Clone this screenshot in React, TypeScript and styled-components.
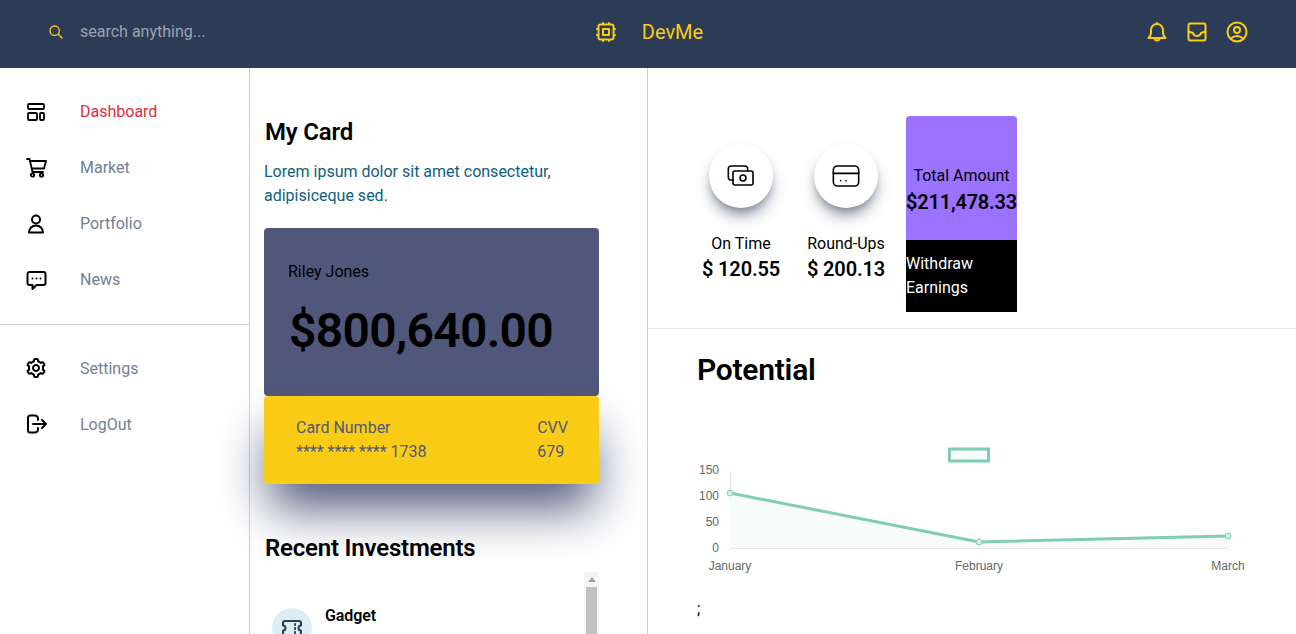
import React, { ReactNode } from 'react'
import styled, { createGlobalStyle } from 'styled-components'
import { BiCog } from 'react-icons/bi'

const GlobalStyle = createGlobalStyle`
  html, body {
    margin: 0;
    padding: 0;
    height: 100%;
    background: #fff;
    font-family: Roboto, "Liberation Sans", sans-serif;
  }
  #root { height: 100%; }
  * { box-sizing: border-box; }
`

const Page = styled.div`
  display: flex;
  flex-direction: column;
  height: 100vh;
  overflow: hidden;
`

const TopBar = styled.header`
  display: grid;
  grid-template-columns: 1fr auto 1fr;
  align-items: center;
  flex: 0 0 68px;
  padding: 0 47px 4px 48px;
  background: #2d3c56;
  color: #facc15;
`

const SearchBox = styled.label`
  display: flex;
  align-items: center;
  gap: 16px;
`

const SearchInput = styled.input`
  width: 240px;
  padding: 0;
  border: 0;
  outline: 0;
  background: transparent;
  color: #fff;
  font: 16px/24px Roboto, sans-serif;
  &::placeholder { color: #9ca3af; opacity: 1; }
`

const Brand = styled.div`
  display: flex;
  align-items: center;
  gap: 24px;
  font-size: 20px;
  line-height: 28px;
`

const TopActions = styled.div`
  display: flex;
  justify-content: flex-end;
  gap: 16px;
`

const Body = styled.div`
  display: flex;
  flex: 1;
  min-height: 0;
`

const Sidebar = styled.nav`
  flex: 0 0 250px;
  border-right: 1px solid #cbd0d8;
`

const NavGroup = styled.ul<{ $divided?: boolean }>`
  margin: 0;
  padding: ${p => (p.$divided ? '15px 0 17px' : '15px 0')};
  list-style: none;
  border-bottom: ${p => (p.$divided ? '1px solid #cbd0d8' : '0')};
`

const NavItem = styled.li<{ $active?: boolean }>`
  display: flex;
  align-items: center;
  gap: 32px;
  height: 56px;
  padding-left: 24px;
  font-size: 16px;
  color: ${p => (p.$active ? '#e02d3c' : '#718096')};
  svg { color: #000; flex: none; }
`

const CardColumn = styled.section`
  flex: 0 0 398px;
  padding: 46px 0 0 14px;
  border-right: 1px solid #cbd0d8;
`

const SectionTitle = styled.h2`
  margin: 0;
  padding-left: 1px;
  font-size: 24px;
  line-height: 36px;
  font-weight: 600;
  letter-spacing: -0.2px;
  color: #000;
`

const Intro = styled.p`
  margin: 10px 0 20px;
  width: 320px;
  font-size: 16px;
  line-height: 24px;
  color: #0f5e7d;
`

const BalanceCard = styled.div`
  display: flex;
  flex-direction: column;
  width: 335px;
  height: 168px;
  padding: 32px 24px 0;
  border-radius: 4px;
  background: #50577a;
  color: #000;
`

const Holder = styled.div`
  font-size: 16px;
  line-height: 24px;
`

const Balance = styled.div`
  margin: 11px 0 0 1px;
  font-size: 48px;
  line-height: 72px;
  font-weight: 600;
  letter-spacing: -0.7px;
  white-space: nowrap;
`

const DetailCard = styled.div`
  display: flex;
  justify-content: space-between;
  width: 335px;
  height: 88px;
  padding: 20px 31px 0 32px;
  border-radius: 4px;
  background: #facc15;
  color: #50577a;
  font-size: 16px;
  line-height: 24px;
  box-shadow: 0 30px 50px -6px #50577a;
`

const RecentTitle = styled(SectionTitle)`
  margin: 46px 0 6px;
`

const InvestmentPanel = styled.div`
  display: flex;
  width: 335px;
  height: 300px;
`

const InvestmentList = styled.ul`
  flex: 1;
  margin: 0;
  padding: 32px 0 0 8px;
  list-style: none;
`

const ScrollRail = styled.div`
  display: flex;
  flex-direction: column;
  align-items: center;
  flex: 0 0 15px;
  background: #f5f5f5;
`

const ScrollArrow = styled.span`
  flex: none;
  width: 8px;
  height: 5px;
  margin: 5px 0;
  border-style: solid;
  border-width: 0 4px 5px;
  border-color: transparent transparent #a3a3a3;
`

const ScrollThumb = styled.span`
  flex: none;
  width: 11px;
  height: 220px;
  background: #c1c1c1;
`

const InvestmentRow = styled.li`
  display: flex;
  gap: 13px;
`

const InvestmentIcon = styled.span`
  display: flex;
  align-items: center;
  justify-content: center;
  flex: none;
  width: 40px;
  height: 40px;
  margin-top: 4px;
  border-radius: 50%;
  background: #dceef4;
  color: #2d3c56;
`

const InvestmentName = styled.div`
  font-size: 16px;
  line-height: 24px;
  font-weight: 600;
  letter-spacing: -0.1px;
  color: #000;
`

const StatsColumn = styled.main`
  flex: 1;
  min-width: 0;
`

const StatsRow = styled.div`
  display: flex;
  gap: 3px;
  height: 261px;
  padding: 48px 0 16px 42px;
  border-bottom: 1px solid #e5e7eb;
`

const Stat = styled.div`
  display: flex;
  flex-direction: column;
  align-items: center;
  width: 102px;
  padding-top: 28px;
  color: #000;
`

const StatBubble = styled.span`
  display: flex;
  align-items: center;
  justify-content: center;
  width: 64px;
  height: 64px;
  margin-bottom: 24px;
  border-radius: 50%;
  background: #fff;
  box-shadow: 0 10px 15px -3px rgba(45, 60, 86, 0.55), 0 4px 6px -2px rgba(45, 60, 86, 0.25);
`

const StatLabel = styled.div`
  font-size: 16px;
  line-height: 24px;
`

const StatValue = styled.div`
  margin-top: -2px;
  font-size: 20px;
  line-height: 30px;
  font-weight: 600;
  letter-spacing: -0.15px;
  white-space: nowrap;
`

const TotalBox = styled.div`
  width: 111px;
  margin-left: 6px;
`

const TotalHead = styled.div`
  height: 124px;
  padding-top: 48px;
  border-radius: 4px 4px 0 0;
  background: #9b72ff;
  color: #000;
  text-align: center;
  white-space: nowrap;
`

const TotalLabel = styled.div`
  font-size: 16px;
  line-height: 24px;
`

const TotalValue = styled.div`
  font-size: 20px;
  line-height: 28px;
  font-weight: 600;
  letter-spacing: -0.2px;
`

const Withdraw = styled.div`
  height: 72px;
  padding: 12px 0;
  background: #000;
  color: #fff;
  font-size: 16px;
  line-height: 24px;
`

const ChartSection = styled.section`
  padding: 19px 0 0 49px;
`

const ChartTitle = styled.h1`
  margin: 0;
  font-size: 30px;
  line-height: 44px;
  font-weight: 600;
  letter-spacing: -0.25px;
  color: #000;
`

const ChartFrame = styled.div`
  margin: 46px 0 0 -2px;
`

const Semi = styled.div`
  margin-top: 9px;
  font-size: 16px;
  line-height: 24px;
  color: #000;
`

const Icon = ({ size = 24, width = 2, children }: { size?: number; width?: number; children: ReactNode }) => (
  <svg
    width={size}
    height={size}
    viewBox="0 0 24 24"
    fill="none"
    stroke="currentColor"
    strokeWidth={width}
    strokeLinecap="round"
    strokeLinejoin="round"
  >
    {children}
  </svg>
)

const SearchIcon = () => (
  <Icon size={16}>
    <circle cx="10" cy="10" r="7" />
    <path d="M15.5 15.5 21 21" />
  </Icon>
)

const ChipIcon = () => (
  <Icon>
    <rect x="4.500" y="4.500" width="15" height="15" rx="2" />
    <rect x="9" y="9" width="6" height="6" />
    <path d="M9 3v1M15 3v1M9 20v1M15 20v1M3 9h1M3 15h1M20 9h1M20 15h1" />
  </Icon>
)

const BellIcon = () => (
  <Icon>
    <path d="M3.500 18h17c-1.500-1.500-2.500-3-2.500-5v-3a6 6 0 0 0-12 0v3c0 2-1 3.500-2.500 5Z" />
    <path d="M12 4V3M9.500 18a2.500 2.500 0 0 0 5 0" />
  </Icon>
)

const InboxIcon = () => (
  <Icon>
    <rect x="3.500" y="3.500" width="17" height="17" rx="2" />
    <path d="M3.500 11.500 8 13c.5 2 2 3 4 3s3.500-1 4-3l4.500-1.500" />
  </Icon>
)

const UserCircleIcon = () => (
  <Icon>
    <circle cx="12" cy="12" r="9.500" />
    <circle cx="12" cy="10" r="3" />
    <path d="M6 18.500c1.500-1.500 3.500-2.500 6-2.500s4.500 1 6 2.500" />
  </Icon>
)

const LayoutIcon = () => (
  <Icon width={1.8}>
    <rect x="4" y="5" width="16" height="5" rx="1" />
    <rect x="4" y="14" width="9" height="7" rx="1" />
    <rect x="16" y="14" width="4" height="7" rx="1" />
  </Icon>
)

const CartIcon = () => (
  <Icon width={1.8}>
    <path d="M3 4h2.500l3 13h10.500" />
    <path d="M6 6h16l-2 7.500H8" />
    <circle cx="8.500" cy="20" r="1.700" />
    <circle cx="17.500" cy="20" r="1.700" />
  </Icon>
)

const PersonIcon = () => (
  <Icon>
    <circle cx="12" cy="8.500" r="4" />
    <path d="M5 21.500c0-4 3-7 7-7s7 3 7 7Z" />
  </Icon>
)

const ChatIcon = () => (
  <Icon>
    <path d="M5.500 5h14a2 2 0 0 1 2 2v9a2 2 0 0 1-2 2h-7l-4 4v-4h-3a2 2 0 0 1-2-2V7a2 2 0 0 1 2-2Z" />
    <path d="M8.500 11.500h.01M12.500 11.500h.01M16.500 11.500h.01" />
  </Icon>
)

const LogOutIcon = () => (
  <Icon>
    <path d="M14 8V6.500a3 3 0 0 0-3-3H6a2 2 0 0 0-2 2v13a2 2 0 0 0 2 2h5a3 3 0 0 0 3-3V16" />
    <path d="M9 12h13M18 8l4 4-4 4" />
  </Icon>
)

const CashIcon = () => (
  <Icon size={32} width={1.2}>
    <path d="M17 8V6.500a2 2 0 0 0-2-2H4.500a2 2 0 0 0-2 2V13a2 2 0 0 0 2 2H6" />
    <rect x="6" y="8.250" width="15" height="10.500" rx="1.500" />
    <circle cx="13.500" cy="13.500" r="2.200" />
  </Icon>
)

const CardIcon = () => (
  <Icon size={32} width={1.2}>
    <rect x="2.500" y="4.500" width="19" height="15" rx="3" />
    <path d="M2.500 10h19M8 15.500h.01M12 15.500h.01" />
  </Icon>
)

const TicketIcon = () => (
  <Icon>
    <path d="M5 5h14a2 2 0 0 1 2 2v2.500a2.500 2.500 0 0 0 0 5V17a2 2 0 0 1-2 2H5a2 2 0 0 1-2-2v-2.500a2.500 2.500 0 0 0 0-5V7a2 2 0 0 1 2-2Z" />
    <path d="M15 8v1M15 12v1M15 16v1" />
  </Icon>
)

const primaryNav = [
  { label: 'Dashboard', icon: <LayoutIcon />, active: true },
  { label: 'Market', icon: <CartIcon /> },
  { label: 'Portfolio', icon: <PersonIcon /> },
  { label: 'News', icon: <ChatIcon /> }
]

const secondaryNav = [
  { label: 'Settings', icon: <BiCog size={24} /> },
  { label: 'LogOut', icon: <LogOutIcon /> }
]

const ticks = [
  { label: '150', y: 32 },
  { label: '100', y: 58 },
  { label: '50', y: 84 },
  { label: '0', y: 110 }
]

const points = [
  { label: 'January', x: 35, y: 55 },
  { label: 'February', x: 284, y: 104 },
  { label: 'March', x: 533, y: 98 }
]

const LineChart = () => {
  const line = points.map(p => `${p.x},${p.y}`).join(' ')
  return (
    <svg width="556" height="146" viewBox="0 0 556 146" fontFamily="Liberation Sans, sans-serif" fontSize="12" fill="#666">
      <rect x="254.500" y="11" width="39" height="12" fill="#f7fbf9" stroke="#7fcdb5" strokeWidth="3" />
      <path d="M35.500 33V110.500H533" fill="none" stroke="#e2e4e6" />
      <polygon points={`35,110 ${line} 533,110`} fill="#f7fbf9" />
      <polyline points={line} fill="none" stroke="#7fcdb5" strokeWidth="3" />
      {points.map(p => (
        <circle key={p.label} cx={p.x} cy={p.y} r="3" fill="#d5eee6" stroke="#7fcdb5" />
      ))}
      {ticks.map(t => (
        <text key={t.label} x="24" y={t.y + 4} textAnchor="end">
          {t.label}
        </text>
      ))}
      {points.map(p => (
        <text key={p.label} x={p.x} y="132" textAnchor="middle">
          {p.label}
        </text>
      ))}
    </svg>
  )
}

const App = () => {
  return (
    <Page>
      <GlobalStyle />
      <TopBar>
        <SearchBox>
          <SearchIcon />
          <SearchInput placeholder="search anything..." />
        </SearchBox>
        <Brand>
          <ChipIcon />
          DevMe
        </Brand>
        <TopActions>
          <BellIcon />
          <InboxIcon />
          <UserCircleIcon />
        </TopActions>
      </TopBar>
      <Body>
        <Sidebar>
          <NavGroup $divided>
            {primaryNav.map(item => (
              <NavItem key={item.label} $active={item.active}>
                {item.icon}
                {item.label}
              </NavItem>
            ))}
          </NavGroup>
          <NavGroup>
            {secondaryNav.map(item => (
              <NavItem key={item.label}>
                {item.icon}
                {item.label}
              </NavItem>
            ))}
          </NavGroup>
        </Sidebar>
        <CardColumn>
          <SectionTitle>My Card</SectionTitle>
          <Intro>Lorem ipsum dolor sit amet consectetur, adipisiceque sed.</Intro>
          <BalanceCard>
            <Holder>Riley Jones</Holder>
            <Balance>$800,640.00</Balance>
          </BalanceCard>
          <DetailCard>
            <div>
              <div>Card Number</div>
              <div>**** **** **** 1738</div>
            </div>
            <div>
              <div>CVV</div>
              <div>679</div>
            </div>
          </DetailCard>
          <RecentTitle>Recent Investments</RecentTitle>
          <InvestmentPanel>
            <InvestmentList>
              <InvestmentRow>
                <InvestmentIcon>
                  <TicketIcon />
                </InvestmentIcon>
                <InvestmentName>Gadget</InvestmentName>
              </InvestmentRow>
            </InvestmentList>
            <ScrollRail>
              <ScrollArrow />
              <ScrollThumb />
            </ScrollRail>
          </InvestmentPanel>
        </CardColumn>
        <StatsColumn>
          <StatsRow>
            <Stat>
              <StatBubble>
                <CashIcon />
              </StatBubble>
              <StatLabel>On Time</StatLabel>
              <StatValue>$ 120.55</StatValue>
            </Stat>
            <Stat>
              <StatBubble>
                <CardIcon />
              </StatBubble>
              <StatLabel>Round-Ups</StatLabel>
              <StatValue>$ 200.13</StatValue>
            </Stat>
            <TotalBox>
              <TotalHead>
                <TotalLabel>Total Amount</TotalLabel>
                <TotalValue>$211,478.33</TotalValue>
              </TotalHead>
              <Withdraw>
                Withdraw
                <br />
                Earnings
              </Withdraw>
            </TotalBox>
          </StatsRow>
          <ChartSection>
            <ChartTitle>Potential</ChartTitle>
            <ChartFrame>
              <LineChart />
            </ChartFrame>
            <Semi>;</Semi>
          </ChartSection>
        </StatsColumn>
      </Body>
    </Page>
  )
}

export default App
